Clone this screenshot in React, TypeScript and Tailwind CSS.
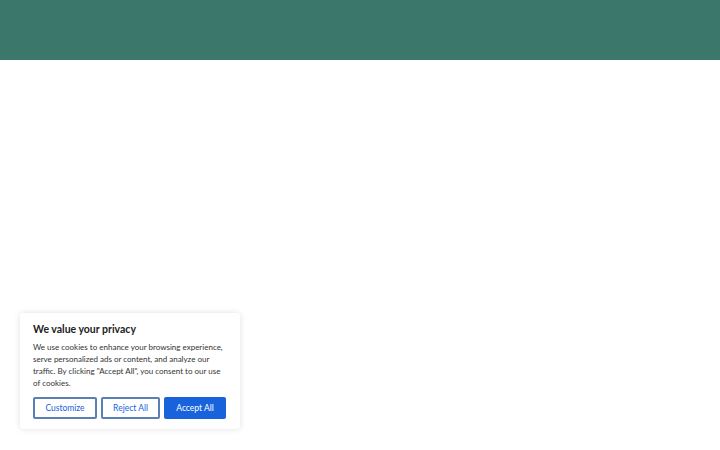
export default function App() {
  return (
    <div className="relative h-[450px] w-[720px] overflow-hidden bg-white font-['Lato',sans-serif]">
      <header className="h-[60px] w-full bg-[#3b776b]" />

      <div className="absolute left-[20px] top-[313px] w-[220px] rounded-[3px] bg-white px-[13px] pb-[10px] pt-[9px] shadow-[0_0_6px_rgba(0,0,0,0.12)]">
        <p className="text-[10.5px] font-bold leading-[14px] text-[#212121]">We value your privacy</p>
        <p className="mt-[5px] whitespace-nowrap text-[8px] leading-[12px] text-[#333]">
          We use cookies to enhance your browsing experience,
          <br />
          serve personalized ads or content, and analyze our
          <br />
          traffic. By clicking "Accept All", you consent to our use
          <br />
          of cookies.
        </p>
        <div className="mt-[8px] flex gap-[4px]">
          <button className="h-[22px] w-[64px] rounded-[2px] border-[2px] border-[#5a7fb5] bg-white text-[8.5px] text-[#1863dc]">
            Customize
          </button>
          <button className="h-[22px] w-[59px] rounded-[2px] border-[2px] border-[#5a7fb5] bg-white text-[8.5px] text-[#1863dc]">
            Reject All
          </button>
          <button className="h-[22px] w-[62px] rounded-[2px] border-[2px] border-[#1863dc] bg-[#1863dc] text-[8.5px] text-white">
            Accept All
          </button>
        </div>
      </div>
    </div>
  );
}
